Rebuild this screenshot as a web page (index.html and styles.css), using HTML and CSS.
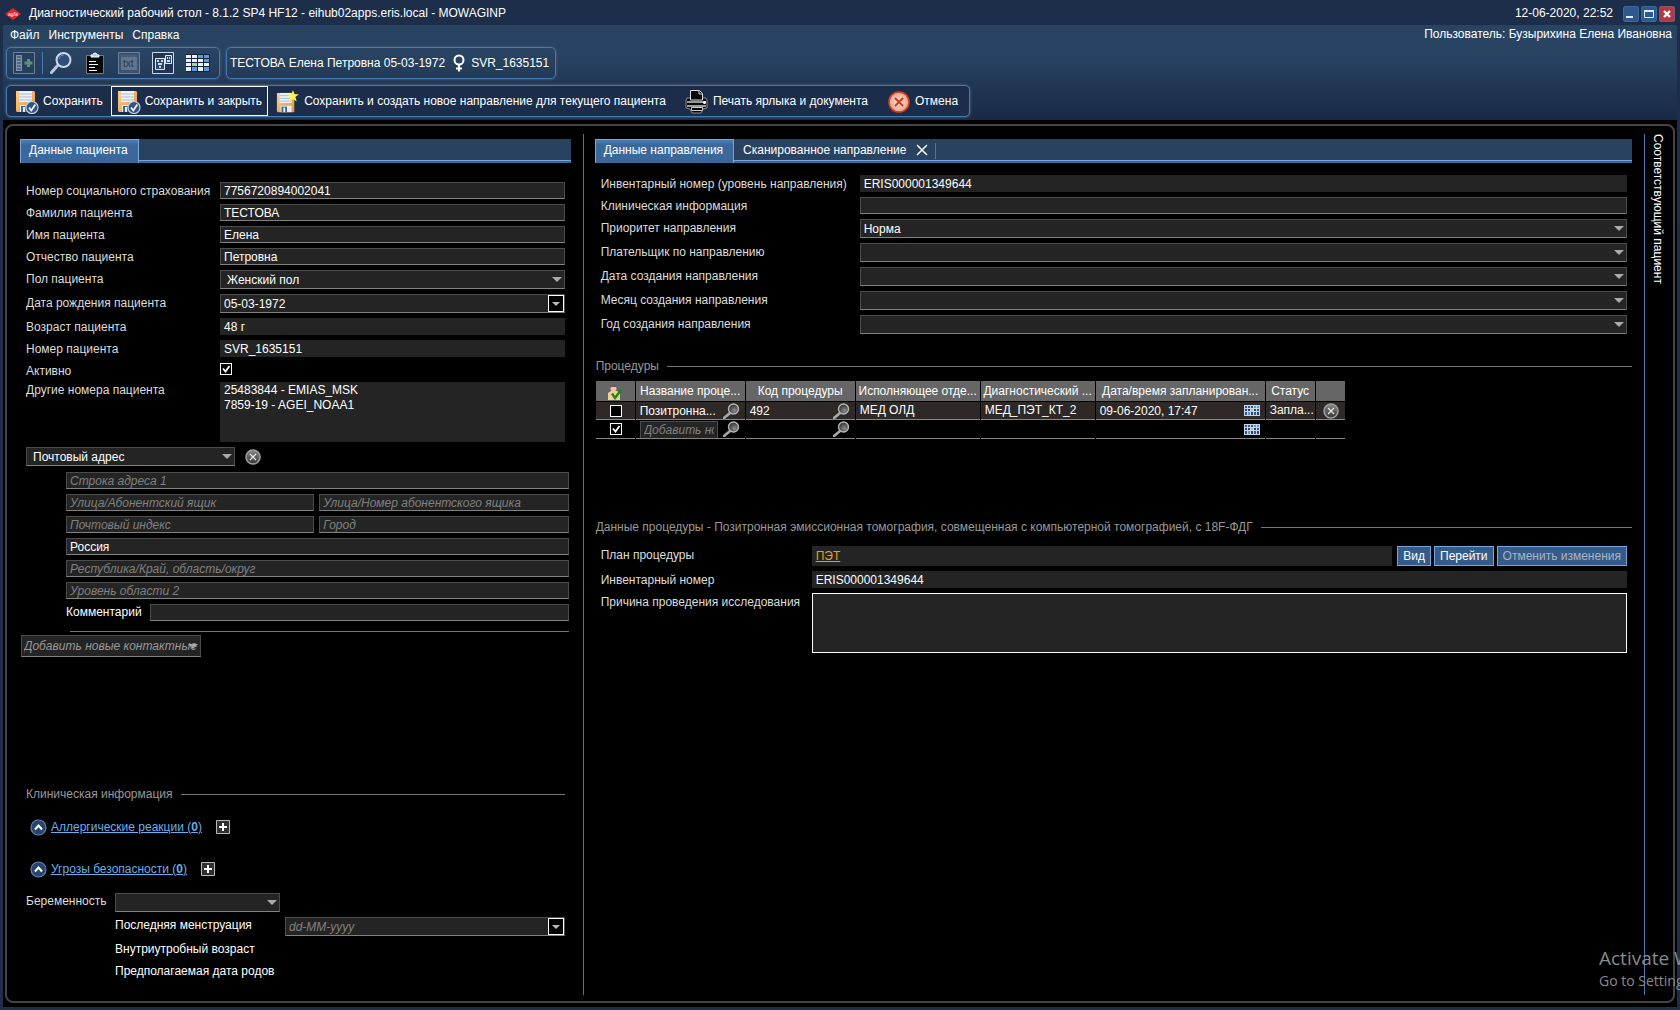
FILE: index.html
```html
<!DOCTYPE html>
<html lang="ru">
<head>
<meta charset="utf-8">
<title>Диагностический рабочий стол</title>
<link rel="stylesheet" href="styles.css">
</head>
<body>
<svg class="defs" aria-hidden="true">
  <defs>
    <linearGradient id="metal" x1="0" y1="0" x2="0" y2="1"><stop offset="0" stop-color="#8a8a8a"/><stop offset="1" stop-color="#333"/></linearGradient>
    <linearGradient id="floppy" x1="0" y1="0" x2="1" y2="1"><stop offset="0" stop-color="#ffd089"/><stop offset="1" stop-color="#dc9440"/></linearGradient>
    <radialGradient id="lens" cx=".6" cy=".65" r=".6"><stop offset="0" stop-color="#8d8d8d"/><stop offset="1" stop-color="#333"/></radialGradient>
    <radialGradient id="pink"><stop offset="0" stop-color="#fbe0d8"/><stop offset="1" stop-color="#e9a493"/></radialGradient>
    <symbol id="disk" viewBox="0 0 24 24">
      <path d="M1 1h18l1 1v20H2l-1-1z" fill="url(#floppy)"/>
      <path d="M4 1h13v11H4z" fill="#eef2f8"/>
      <path d="M4 4h13M4 7h13M4 10h13" stroke="#a9bdd6"/>
      <path d="M5 15h12v7H5z" fill="#e8edf5"/><path d="M6 16h6v6H6z" fill="#3f6795"/><path d="M8 17h2v5H8z" fill="#e8edf5"/>
    </symbol>
    <symbol id="disk-check" viewBox="0 0 24 24">
      <use href="#disk" width="24" height="24"/>
      <circle cx="17" cy="17.500" r="6" fill="#34547f" stroke="#c3d2e6" stroke-width="1.200"/>
      <path d="M14 17.500l2.300 3 4-6" fill="none" stroke="#e9f0fa" stroke-width="1.800"/>
    </symbol>
    <symbol id="find" viewBox="0 0 17 16">
      <path d="M1 15l6-5" stroke="#a8a8a8" stroke-width="2.600" stroke-linecap="round"/>
      <circle cx="10.500" cy="6" r="5" fill="url(#lens)" stroke="#b5b5b5" stroke-width="1.400"/>
    </symbol>
    <symbol id="cal" viewBox="0 0 16 11">
      <path d="M0 0h16v11H0z" fill="#c9d6e8"/>
      <path d="M1 1h2v2H1zM4 1h2v2H4zM7 1h2v2H7zM1 7h2v3H1zM13 4h2v2h-2zM10 7h2v3h-2z" fill="#33588a"/>
      <path d="M10 1h2v2h-2zM13 1h2v2h-2zM4 7h2v3H4z" fill="#5b93d4"/>
      <path d="M1 4h2v2H1zM4 4h2v2H4zM10 4h2v2h-2zM7 7h2v3H7zM13 7h2v3h-2z" fill="#27446e"/>
      <path d="M7 4h2v2H7z" fill="#9fd0a5"/>
    </symbol>
    <symbol id="remove" viewBox="0 0 16 16">
      <circle cx="8" cy="8" r="7" fill="url(#metal)" stroke="#9c9c9c" stroke-width="1.600"/>
      <path d="M5 5l6 6M11 5l-6 6" stroke="#e8e8e8" stroke-width="1.200"/>
    </symbol>
    <symbol id="collapse" viewBox="0 0 17 17">
      <circle cx="8.500" cy="8.500" r="7.500" fill="#28466c" stroke="#5f84b0" stroke-width="1.200"/>
      <path d="M5 10.500l3.500-4 3.500 4" fill="none" stroke="#fff" stroke-width="2"/>
    </symbol>
    <symbol id="plus" viewBox="0 0 14 14">
      <path d="M.5.5h13v13H.5z" fill="#303030" stroke="#b9b9b9"/>
      <path d="M7 3v8M3 7h8" stroke="#fff" stroke-width="2"/>
    </symbol>
  </defs>
</svg>

<header class="titlebar">
  <svg class="logo" width="16" height="12" viewBox="0 0 16 12"><path d="M8 0l8 6-8 6-8-6z" fill="#e5252a"/><text x="3" y="8" font-size="5" font-style="italic" fill="#fff">agfa</text></svg>
  <h1 class="title">Диагностический рабочий стол - 8.1.2 SP4 HF12 - eihub02apps.eris.local - MOWAGINP</h1>
  <time class="clock">12-06-2020, 22:52</time>
  <div class="winbtns">
    <button class="winbtn" aria-label="Свернуть"><svg width="16" height="16" viewBox="0 0 16 16"><path d="M3 10h7v2H3z" fill="#e3ecf8"/></svg></button>
    <button class="winbtn" aria-label="Развернуть"><svg width="16" height="16" viewBox="0 0 16 16"><path d="M3.500 4.500h9v7h-9z" fill="none" stroke="#dfe9f6"/><path d="M3 4h10v2H3z" fill="#dfe9f6"/></svg></button>
    <button class="winbtn winbtn-close" aria-label="Закрыть"><svg width="16" height="16" viewBox="0 0 16 16"><path d="M5 5l6 6M11 5l-6 6" stroke="#fff" stroke-width="2.400"/></svg></button>
  </div>
</header>

<div class="frame">
  <div class="top">
    <div class="menurow">
      <nav class="menu"><a href="#">Файл</a><a href="#">Инструменты</a><a href="#">Справка</a></nav>
      <span class="user">Пользователь: Бузырихина Елена Ивановна</span>
    </div>
    <div class="bars">
      <div class="bar tools">
        <button class="tool" aria-label="Добавить в список"><svg width="22" height="22" viewBox="0 0 22 22"><path d="M.5.5h21v21H.5z" fill="#263f5e" stroke="#6d8097"/><path d="M3 3h6v16H3z" fill="#8293a8"/><path d="M4 5h4M4 8h4M4 11h4M4 14h4M4 17h4" stroke="#263f5e"/><path d="M15.500 7v8M11.500 11h8" stroke="#5b9079" stroke-width="3"/></svg></button>
        <span class="sep"></span>
        <button class="tool" aria-label="Поиск"><svg width="22" height="22" viewBox="0 0 22 22"><path d="M1.500 20.500l7-8" stroke="#b9c6e4" stroke-width="3" stroke-linecap="round"/><circle cx="13.500" cy="8" r="7" fill="#2f5079" stroke="#ccd7ef" stroke-width="2"/><path d="M9 7a5 5 0 0 1 5-4" stroke="#6d90b8" fill="none"/></svg></button>
        <button class="tool clip" aria-label="Задания"><svg width="18" height="22" viewBox="0 0 18 22"><path d="M.5 3.500h17v18H.5z" fill="#050505" stroke="#777"/><path d="M5 5V3h2a2 2 0 0 1 4 0h2v2z" fill="#b7cbe4" stroke="#fff"/><path d="M3 9.500h7M3 12.500h9M3 15.500h6M3 18.500h8" stroke="#fff"/></svg></button>
        <button class="tool" aria-label="Текст"><svg width="22" height="22" viewBox="0 0 22 22"><path d="M.5.500h21v21H.5z" fill="#3b536f" stroke="#6d8097"/><path d="M3 3h16v15H3z" fill="#60758d"/><path d="M3 4h16" stroke="#2c4663"/><text x="5" y="15" font-size="10" fill="#26384e">txt</text></svg></button>
        <button class="tool" aria-label="Изображения"><svg width="22" height="22" viewBox="0 0 22 22"><path d="M.5.500h21v21H.5z" fill="#1f3553" stroke="#cad6e8"/><path d="M3.500 6.500h9v11h-9zM13.500 3.500h6v8h-6z" fill="#2a486d" stroke="#e6edf7"/><path d="M5 8h2v2H5zM9 8h2v2H9zM6 11h4v2H6zM7 14h2v2H7zM15 5h1v2h-1zM17 5h1v2h-1zM15 8h3v2h-3z" fill="#cfdaea"/></svg></button>
        <button class="tool" aria-label="Расписание"><svg width="24" height="18" viewBox="0 0 24 18"><path d="M0 0h24v18H0z" fill="#14223b"/><path d="M0 1h5v3H0zM6 1h5v3H6zM0 5h5v3H0zM6 5h5v3H6zM12 5h5v3h-5zM0 9h5v3H0zM12 9h5v3h-5zM18 9h5v3h-5zM0 13h5v4H0zM12 13h5v4h-5z" fill="#edf2fa"/><path d="M12 1h5v3h-5zM18 1h5v3h-5zM18 5h5v3h-5zM6 13h5v4H6zM18 13h5v4h-5z" fill="#5d97dc"/><path d="M6 9h5v3H6z" fill="#9ddca3"/></svg></button>
      </div>
      <div class="bar patient">
        <span>ТЕСТОВА Елена Петровна 05-03-1972</span>
        <svg width="12" height="18" viewBox="0 0 12 18"><circle cx="6" cy="6" r="4.500" fill="none" stroke="#fff" stroke-width="2"/><path d="M6 11v6.500M3 14.500h6" stroke="#fff" stroke-width="2"/></svg>
        <span>SVR_1635151</span>
      </div>
    </div>
    <div class="bars">
      <div class="bar actions">
        <button class="action"><svg width="24" height="24"><use href="#disk-check"/></svg>Сохранить</button>
        <button class="action focused"><svg width="24" height="24"><use href="#disk-check"/></svg>Сохранить и закрыть</button>
        <button class="action roomy"><svg width="24" height="24" viewBox="0 0 24 24"><use href="#disk" y="2" width="22" height="22"/><path d="M17 0l1.500 4.200 4.500.1-3.600 2.800 1.300 4.400L17 9l-3.700 2.500 1.300-4.400L11 4.300l4.500-.1z" fill="#fff34d"/></svg>Сохранить и создать новое направление для текущего пациента</button>
        <button class="action roomy"><svg width="24" height="24" viewBox="0 0 24 24"><path d="M2 8h19l1 2v8l-4 1-2 4H7l-2-4-4-1v-8z" fill="#0a0a0a" stroke="#8a8a8a"/><path d="M5.500 10V.500h9l3 3V10z" fill="#070707" stroke="#ddd"/><path d="M14 1v3h3" fill="none" stroke="#ddd"/><path d="M2 12h19M2 16h19" stroke="#999" stroke-width="2"/><path d="M6.500 17.500h11v3h-11z" fill="#000" stroke="#ccc"/><circle cx="19.500" cy="12.500" r="1.500" fill="#fff"/></svg>Печать ярлыка и документа</button>
        <button class="action roomy"><svg width="24" height="24" viewBox="0 0 24 24"><circle cx="12" cy="12" r="10" fill="url(#pink)" stroke="#d8401a" stroke-width="1.600"/><path d="M8 8l8 8M16 8l-8 8" stroke="#d03a12" stroke-width="1.800"/></svg>Отмена</button>
      </div>
    </div>
  </div>

  <main class="panel">
    <section class="pane left">
      <div class="tabs" role="tablist"><button class="tab active" role="tab">Данные пациента</button></div>
      <form class="form patient-form">
        <label for="snils">Номер социального страхования</label><input class="field" id="snils" value="7756720894002041">
        <label for="last">Фамилия пациента</label><input class="field" id="last" value="ТЕСТОВА">
        <label for="first">Имя пациента</label><input class="field" id="first" value="Елена">
        <label for="mid">Отчество пациента</label><input class="field" id="mid" value="Петровна">
        <label for="sex">Пол пациента</label><select class="field combo" id="sex"><option>Женский пол</option></select>
        <label for="dob">Дата рождения пациента</label><div class="field date"><input id="dob" value="05-03-1972"><button type="button" class="drop" aria-label="Выбрать дату"></button></div>
        <label for="age">Возраст пациента</label><input class="field plain" id="age" value="48 г" readonly>
        <label for="pid">Номер пациента</label><input class="field plain" id="pid" value="SVR_1635151" readonly>
        <label for="act">Активно</label><input type="checkbox" class="check" id="act" checked>
        <label for="other">Другие номера пациента</label><textarea class="field plain ids" id="other" readonly>25483844 - EMIAS_MSK
7859-19 - AGEI_NOAA1</textarea>
      </form>

      <div class="addrhead">
        <select class="field combo" aria-label="Тип контакта"><option>Почтовый адрес</option></select>
        <button class="iconbtn" aria-label="Удалить адрес"><svg width="16" height="16"><use href="#remove"/></svg></button>
      </div>
      <div class="address">
        <input class="field wide" aria-label="Строка адреса 1" placeholder="Строка адреса 1">
        <input class="field" aria-label="Улица" placeholder="Улица/Абонентский ящик">
        <input class="field" aria-label="Номер" placeholder="Улица/Номер абонентского ящика">
        <input class="field" aria-label="Индекс" placeholder="Почтовый индекс">
        <input class="field" aria-label="Город" placeholder="Город">
        <input class="field wide" aria-label="Страна" value="Россия">
        <input class="field wide" aria-label="Регион" placeholder="Республика/Край, область/округ">
        <input class="field wide" aria-label="Уровень области 2" placeholder="Уровень области 2">
        <div class="wide comment"><label for="comment">Комментарий</label><input class="field" id="comment"></div>
      </div>
      <select class="field combo addcontact" aria-label="Контакты"><option>Добавить новые контактные данные</option></select>

      <section class="clinical">
        <h2 class="legend">Клиническая информация</h2>
        <div class="fold"><svg width="17" height="17"><use href="#collapse"/></svg><a href="#">Аллергические реакции (<b>0</b>)</a><button class="iconbtn" aria-label="Добавить аллергию"><svg width="14" height="14"><use href="#plus"/></svg></button></div>
        <div class="fold"><svg width="17" height="17"><use href="#collapse"/></svg><a href="#">Угрозы безопасности (<b>0</b>)</a><button class="iconbtn" aria-label="Добавить угрозу"><svg width="14" height="14"><use href="#plus"/></svg></button></div>
        <div class="pregnancy">
          <label for="preg">Беременность</label><select class="field combo" id="preg"><option></option></select>
          <label class="sub" for="lmp">Последняя менструация</label><div class="field date"><input id="lmp" placeholder="dd-MM-yyyy"><button type="button" class="drop" aria-label="Выбрать дату"></button></div>
          <span class="sub">Внутриутробный возраст</span>
          <span class="sub">Предполагаемая дата родов</span>
        </div>
      </section>
    </section>

    <section class="pane right">
      <div class="tabs" role="tablist">
        <button class="tab active" role="tab">Данные направления</button>
        <button class="tab" role="tab">Сканированное направление<svg width="12" height="12" viewBox="0 0 12 12"><path d="M1 1l10 10M11 1L1 11" stroke="#fff" stroke-width="1.500"/></svg></button>
      </div>
      <form class="form order-form">
        <label for="acc">Инвентарный номер (уровень направления)</label><input class="field plain" id="acc" value="ERIS000001349644" readonly>
        <label for="clin">Клиническая информация</label><input class="field" id="clin">
        <label for="prio">Приоритет направления</label><select class="field combo tight" id="prio"><option>Норма</option></select>
        <label for="payer">Плательщик по направлению</label><select class="field combo" id="payer"><option></option></select>
        <label for="day">Дата создания направления</label><select class="field combo" id="day"><option></option></select>
        <label for="month">Месяц создания направления</label><select class="field combo" id="month"><option></option></select>
        <label for="year">Год создания направления</label><select class="field combo" id="year"><option></option></select>
      </form>

      <h2 class="legend procs">Процедуры</h2>
      <table class="grid">
        <colgroup><col class="c1"><col class="c2"><col class="c2"><col class="c3"><col class="c4"><col class="c5"><col class="c6"><col class="c7"></colgroup>
        <thead><tr>
          <th><svg width="16" height="16" viewBox="0 0 16 16"><path d="M1 16V9l3-2h6l3 2v7z" fill="#f3cf98"/><circle cx="6.500" cy="4.500" r="3" fill="#f1c9a0"/><path d="M3 4a3.500 3.500 0 0 1 7 0l-1-1H4z" fill="#7a4d63"/><path d="M5 9.500l3 4.500 6-8" fill="none" stroke="#178a18" stroke-width="2.400"/></svg></th>
          <th>Название проце...</th><th>Код процедуры</th><th>Исполняющее отде...</th><th>Диагностический ...</th><th>Дата/время запланирован...</th><th>Статус</th><th></th>
        </tr></thead>
        <tbody>
          <tr>
            <td class="mid"><input type="checkbox" class="check" aria-label="Выбрать"></td>
            <td><div class="cell"><span>Позитронна...</span><svg width="17" height="16"><use href="#find"/></svg></div></td>
            <td><div class="cell"><span>492</span><svg width="17" height="16"><use href="#find"/></svg></div></td>
            <td>МЕД ОЛД</td><td>МЕД_ПЭТ_КТ_2</td>
            <td><div class="cell"><span>09-06-2020, 17:47</span><svg width="16" height="11"><use href="#cal"/></svg></div></td>
            <td>Запла...</td>
            <td class="mid"><button class="iconbtn" aria-label="Удалить"><svg width="16" height="16"><use href="#remove"/></svg></button></td>
          </tr>
          <tr>
            <td class="mid"><input type="checkbox" class="check" aria-label="Выбрать" checked></td>
            <td><div class="cell"><input class="field add" aria-label="Процедура" placeholder="Добавить новую"><svg width="17" height="16"><use href="#find"/></svg></div></td>
            <td><div class="cell"><span></span><svg width="17" height="16"><use href="#find"/></svg></div></td>
            <td></td><td></td>
            <td><div class="cell"><span></span><svg width="16" height="11"><use href="#cal"/></svg></div></td>
            <td></td><td></td>
          </tr>
        </tbody>
      </table>

      <h2 class="legend details">Данные процедуры - Позитронная эмиссионная томография, совмещенная с компьютерной томографией, с 18F-ФДГ</h2>
      <div class="form proc-form">
        <span>План процедуры</span>
        <div class="plan"><div class="field plain planlink"><a href="#">ПЭТ</a></div><button class="btn">Вид</button><button class="btn">Перейти</button><button class="btn" disabled>Отменить изменения</button></div>
        <label for="acc2">Инвентарный номер</label><input class="field plain" id="acc2" value="ERIS000001349644" readonly>
        <label for="reason">Причина проведения исследования</label><textarea class="field reason" id="reason"></textarea>
      </div>
    </section>

    <aside class="side"><span>Соответствующий пациент</span></aside>
  </main>
</div>
<div class="watermark"><p class="wm1">Activate Windows</p><p class="wm2">Go to Settings to activate Windows.</p></div>
</body>
</html>
```

FILE: styles.css
```css
* { box-sizing: border-box; }
body {
  margin: 0;
  min-height: 100vh;
  display: flex;
  flex-direction: column;
  background: #1c2e4a;
  color: #fff;
  font: 12px/17px "Liberation Sans", Arial, sans-serif;
}
button, input, select, textarea { font: inherit; color: inherit; margin: 0; border-radius: 0; }
button { background: none; border: 0; padding: 0; }
svg { display: block; flex: none; }
h1, h2, p { margin: 0; font: inherit; }
.defs { position: absolute; width: 0; height: 0; }

/* window title */
.titlebar { display: flex; align-items: center; height: 25px; padding: 2px 5px 0; }
.title { flex: 1; margin-left: 8px; }
.clock { margin-right: 10px; }
.winbtns { display: flex; gap: 2px; }
.winbtn { width: 16px; height: 16px; background: #2d5a8e; border-radius: 3px; box-shadow: inset 0 0 0 1px #3d6a9c; }
.winbtn-close { background: #b03a48; box-shadow: inset 0 0 0 1px #8c5468; }

.frame { flex: 1; display: flex; flex-direction: column; margin: 0 3px 3px; background: #000; }
.top { height: 95px; padding: 0 3px; background: linear-gradient(#284462 0 30%, #192946); }
.menurow { display: flex; justify-content: space-between; height: 22px; padding: 1px 2px 0 4px; }
.menu { display: flex; gap: 9px; padding-top: 1px; }
.menu a { color: #fff; text-decoration: none; }

/* toolbars */
.bars { display: flex; gap: 6px; margin-bottom: 6px; }
.bar {
  display: flex;
  align-items: center;
  height: 32px;
  border: 1px solid #4679ae;
  border-radius: 5px;
  box-shadow: 0 0 2px 1px #3a5270;
}
.tools { padding: 0 9px 0 6px; gap: 12px; }
.tools .sep { width: 1px; height: 22px; margin: 0 -5px; background: #4679ae; }
.tools .clip { margin: 0 2px; }
.patient { padding: 0 6px 0 3px; gap: 8px; }
.patient svg { margin-right: -2px; }
.actions { padding: 0 0 0 2px; gap: 2px; background: #1c2d4b; }
.action { display: flex; align-items: center; gap: 4px; height: 30px; padding: 1px 5px 0; border: 1px solid transparent; }
.action.roomy { padding-right: 10px; }
.action.focused { border-color: #fff; }

/* work area */
.panel {
  flex: 1;
  display: grid;
  grid-template-columns: 577fr 1062fr 28px;
  margin: 4px 2px;
  padding: 8px 0 6px;
  border: 2px solid #444;
  border-radius: 8px;
}
.pane { display: flex; flex-direction: column; min-width: 0; border-right: 1px solid #4679ae; padding-top: 5px; }
.left { padding-left: 13px; padding-right: 12px; }
.right { padding-left: 11px; padding-right: 12px; }
.side { padding: 0 0 0 4px; }
.side span { writing-mode: vertical-rl; }

.tabs { display: flex; height: 24px; background: linear-gradient(#28425f 0 21px, #75a7dc 21px 22px, #3b689b 22px); }
.tab { display: flex; align-items: center; gap: 10px; height: 19px; margin: 1px 0; padding: 1px 9px 0; }
.tab svg { margin-right: 5px; }
.tab:not(.active) { padding-right: 3px; background: linear-gradient(#4679ae, #4679ae) right 3px / 1px 16px no-repeat; }
.tab.active {
  height: 24px;
  margin: 0;
  padding: 0 10px 2px 8px;
  background: linear-gradient(#4a7fb8, #3b689b 5px);
  border: solid #75a7dc;
  border-width: 1px 1px 0;
}

/* fields */
.field {
  display: block;
  width: 100%;
  min-width: 0;
  height: 17px;
  padding: 1px 3px 0;
  background: #242424;
  border: 1px solid #4c4c4c;
  border-bottom-color: #828282;
  outline: 0;
}
.field.plain { border-color: #242424; }
.field::placeholder, .date input::placeholder { color: #808080; font-style: italic; opacity: 1; }
.combo {
  appearance: none;
  height: 19px;
  padding: 1px 20px 0 6px;
  background: #242424 url("data:image/svg+xml,%3Csvg xmlns='http://www.w3.org/2000/svg' width='10' height='5'%3E%3Cpath d='M0 0h10L5 5z' fill='%23aaa'/%3E%3C/svg%3E") no-repeat right 2px center;
}
.combo.tight { padding-left: 3px; }
.date { display: flex; height: 19px; padding: 0 0 0 3px; }
.date input { flex: 1; min-width: 0; border: 0; padding: 1px 0 0; background: none; outline: 0; }
.drop {
  width: 16px;
  height: 17px;
  border: 1px solid #fff;
  background: #000 url("data:image/svg+xml,%3Csvg xmlns='http://www.w3.org/2000/svg' width='8' height='4'%3E%3Cpath d='M0 0h8L4 4z' fill='%23bbb'/%3E%3C/svg%3E") no-repeat center;
}
.check {
  appearance: none;
  display: block;
  width: 12px;
  height: 12px;
  background: #000;
  border: 1px solid #fff;
}
.check:checked { background: #000 url("data:image/svg+xml,%3Csvg xmlns='http://www.w3.org/2000/svg' width='10' height='10'%3E%3Cpath d='M2 4.500l2.500 3L8.500 2' fill='none' stroke='%23fff' stroke-width='1.800'/%3E%3C/svg%3E") no-repeat center; }
textarea.field { height: 60px; padding-top: 0; line-height: 15px; resize: none; }

.form { display: grid; align-items: start; gap: 5px; }
.form label, .form > span { height: 15px; padding-top: 1px; color: #ddd; white-space: nowrap; }
.form label:last-of-type { padding-top: 0; }
.patient-form { grid-template-columns: 189px 1fr; margin: 19px 6px 0; }
.patient-form .check { margin: 1px 0 2px; }

.addrhead { display: flex; align-items: center; gap: 10px; margin: 5px 6px 6px; }
.addrhead .combo { width: 209px; }
.iconbtn { display: block; }
.address { display: grid; grid-template-columns: 248fr 249fr; gap: 5px; margin: 0 2px 0 46px; }
.wide { grid-column: 1 / -1; }
.comment { display: flex; gap: 8px; padding-bottom: 11px; white-space: nowrap; background: linear-gradient(#777, #777) 4px bottom / 100% 1px no-repeat; }
.addcontact { width: 180px; height: 22px; margin: 3px 0 0 1px; padding: 0 0 0 2px; font-style: italic; color: #999; }

.legend { display: flex; align-items: center; gap: 8px; color: #999; white-space: nowrap; }
.legend::after { content: ""; flex: 1; height: 1px; background: #777; }
.clinical { margin: auto 6px 15px; }
.fold { display: flex; align-items: center; height: 18px; margin: 15px 0 24px 4px; }
.fold a { margin: 0 14px 0 4px; color: #6aaeea; }
.fold + .fold { margin-bottom: 15px; }
.pregnancy { display: grid; grid-template-columns: 84px 165px 1fr; gap: 5px; }
.pregnancy > label:first-child { color: #ddd; }
.pregnancy .sub { grid-column: 2; white-space: nowrap; }
.pregnancy .date { grid-column: 3; }

.order-form { grid-template-columns: 254px 1fr; margin: 12px 5px 0 6px; }
.order-form label:last-of-type { padding-top: 1px; }
.procs { margin: 24px 0 6px 1px; }
.grid { width: 751px; table-layout: fixed; border-spacing: 1px 0; }
.c1 { width: 39px; } .c2 { width: 109px; } .c3 { width: 124px; } .c4 { width: 114px; }
.c5 { width: 169px; } .c6 { width: 49px; } .c7 { width: 29px; }
th, td { padding: 0 4px; text-align: left; font-weight: normal; white-space: nowrap; overflow: hidden; }
th { height: 21px; padding: 1px 1px 0; text-align: center; background: #666; border-bottom: 1px solid #000; }
th svg { margin: 0 auto; }
td { height: 18px; line-height: 17px; border-bottom: 1px solid #888; }
tbody tr:first-child td { background: #2e2926; }
tbody tr:last-child td { height: 19px; }
.cell { display: flex; justify-content: space-between; align-items: center; height: 17px; }
.cell > span { padding-top: 2px; }
.cell svg { margin-right: 1px; }
.mid { padding: 0 0 0 2px; }
.mid > * { margin: 0 auto; }
.add { width: 78px; border-bottom: 0; }

.details { margin: 80px 0 10px 1px; }
.proc-form { grid-template-columns: 206px 1fr; margin: 0 5px 0 6px; }
.proc-form label:last-of-type { padding-top: 1px; }
.plan { display: flex; gap: 3px; }
.planlink { flex: 1; width: auto; height: 20px; margin-right: 2px; }
.planlink a { color: #f39a1d; }
.btn { height: 20px; padding: 1px 5px 0; background: #355b8a; border: 1px solid #75a7dc; white-space: nowrap; }
.btn:disabled { color: #a9b4c0; }
.reason { border-color: #fff; }

/* system overlay in the corner of the screen */
.watermark {
  position: absolute;
  right: 0;
  bottom: 0;
  width: 81px;
  height: 68px;
  padding-top: 4px;
  overflow: hidden;
  white-space: nowrap;
  color: #8a8a8a;
  font-family: "Open Sans", "Noto Sans", sans-serif;
  pointer-events: none;
}
.wm1 { font-size: 19px; line-height: 24px; }
.wm2 { font-size: 14px; line-height: 22px; }
```
